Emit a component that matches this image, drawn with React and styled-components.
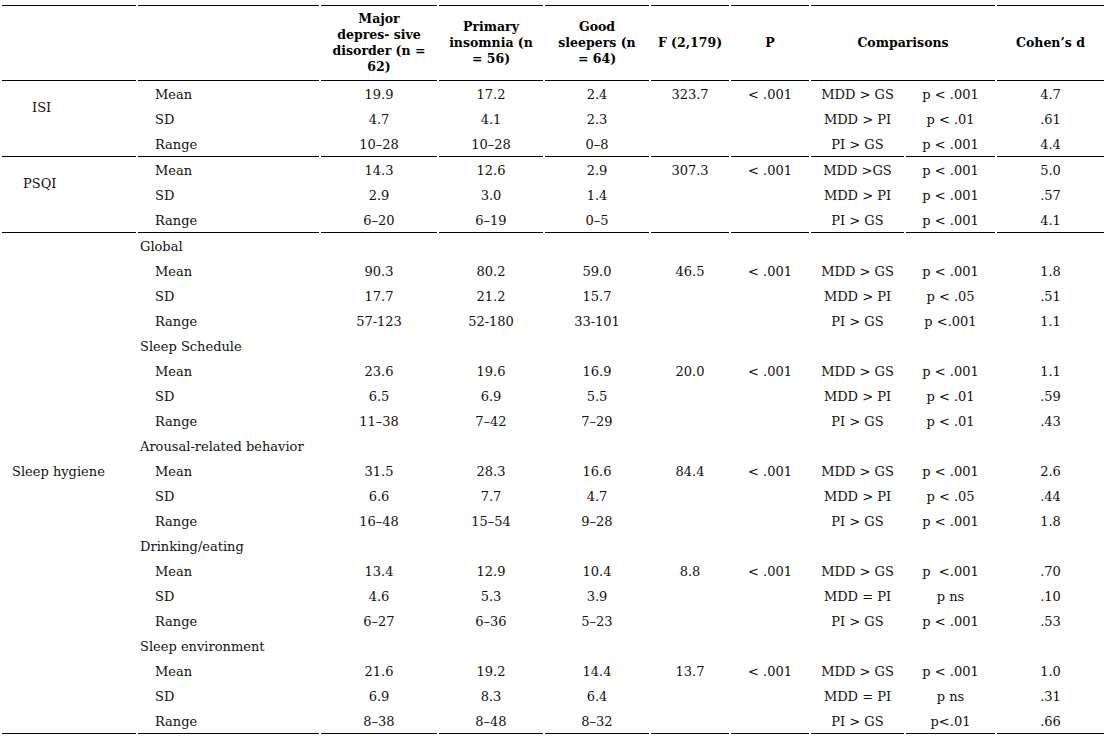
import React from "react";
import styled, { createGlobalStyle } from "styled-components";

const GlobalStyle = createGlobalStyle`
  html, body {
    margin: 0;
    padding: 0;
    background: #fff;
  }
  body {
    font-family: "DejaVu Serif", "Liberation Serif", serif;
    color: #111;
  }
`;

const Table = styled.table`
  width: 1106px;
  margin-top: 3px;
  table-layout: fixed;
  border-collapse: separate;
  border-spacing: 2px;
  font-size: 13px;
`;

const Col = styled.col`
  width: ${(p) => p.$w}px;
`;

const HeadCell = styled.th`
  border-top: 1px solid #000;
  border-bottom: 1px solid #000;
  padding: 5px 2px;
  font-size: 12.5px;
  font-weight: bold;
  line-height: 16px;
  text-align: center;
  vertical-align: middle;
  color: #000;
`;

const Cell = styled.td`
  padding: 1px 2px 1px ${(p) => p.$indent ?? 2}px;
  line-height: 21px;
  white-space: pre;
  text-align: ${(p) => p.$align || "center"};
  vertical-align: middle;
  border-bottom: ${(p) => (p.$end ? "1px solid #000" : "0")};
`;

// ranges in the source use an en dash
const r = (a, b) => `${a}\u2013${b}`;

const groups = [
  {
    label: "ISI",
    indent: 30,
    span: 2,
    rows: [
      ["Mean", "19.9", "17.2", "2.4", "323.7", "< .001", "MDD > GS", "p < .001", "4.7"],
      ["SD", "4.7", "4.1", "2.3", "", "", "MDD > PI", "p < .01", ".61"],
      ["Range", r(10, 28), r(10, 28), r(0, 8), "", "", "PI > GS", "p < .001", "4.4"],
    ],
  },
  {
    label: "PSQI",
    indent: 21,
    span: 2,
    rows: [
      ["Mean", "14.3", "12.6", "2.9", "307.3", "< .001", "MDD >GS", "p < .001", "5.0"],
      ["SD", "2.9", "3.0", "1.4", "", "", "MDD > PI", "p < .001", ".57"],
      ["Range", r(6, 20), r(6, 19), r(0, 5), "", "", "PI > GS", "p < .001", "4.1"],
    ],
  },
];

const hygiene = [
  {
    title: "Global",
    rows: [
      ["Mean", "90.3", "80.2", "59.0", "46.5", "< .001", "MDD > GS", "p < .001", "1.8"],
      ["SD", "17.7", "21.2", "15.7", "", "", "MDD > PI", "p < .05", ".51"],
      ["Range", "57-123", "52-180", "33-101", "", "", "PI > GS", "p <.001", "1.1"],
    ],
  },
  {
    title: "Sleep Schedule",
    rows: [
      ["Mean", "23.6", "19.6", "16.9", "20.0", "< .001", "MDD > GS", "p < .001", "1.1"],
      ["SD", "6.5", "6.9", "5.5", "", "", "MDD > PI", "p < .01", ".59"],
      ["Range", r(11, 38), r(7, 42), r(7, 29), "", "", "PI > GS", "p < .01", ".43"],
    ],
  },
  {
    title: "Arousal-related behavior",
    rows: [
      ["Mean", "31.5", "28.3", "16.6", "84.4", "< .001", "MDD > GS", "p < .001", "2.6"],
      ["SD", "6.6", "7.7", "4.7", "", "", "MDD > PI", "p < .05", ".44"],
      ["Range", r(16, 48), r(15, 54), r(9, 28), "", "", "PI > GS", "p < .001", "1.8"],
    ],
  },
  {
    title: "Drinking/eating",
    rows: [
      ["Mean", "13.4", "12.9", "10.4", "8.8", "< .001", "MDD > GS", "p  <.001", ".70"],
      ["SD", "4.6", "5.3", "3.9", "", "", "MDD = PI", "p ns", ".10"],
      ["Range", r(6, 27), r(6, 36), r(5, 23), "", "", "PI > GS", "p < .001", ".53"],
    ],
  },
  {
    title: "Sleep environment",
    rows: [
      ["Mean", "21.6", "19.2", "14.4", "13.7", "< .001", "MDD > GS", "p < .001", "1.0"],
      ["SD", "6.9", "8.3", "6.4", "", "", "MDD = PI", "p ns", ".31"],
      ["Range", r(8, 38), r(8, 48), r(8, 32), "", "", "PI > GS", "p<.01", ".66"],
    ],
  },
];

const widths = [134, 181, 116, 104, 104, 78, 78, 93, 89, 107];

function Values({ row, end }) {
  return (
    <>
      <Cell $align="left" $indent={17} $end={end}>{row[0]}</Cell>
      {row.slice(1).map((v, i) => (
        <Cell key={i} $end={end}>{v}</Cell>
      ))}
    </>
  );
}

export default function App() {
  const hygieneRows = [];
  hygiene.forEach((sub, si) => {
    hygieneRows.push({ title: sub.title, key: `t${si}` });
    sub.rows.forEach((row, ri) =>
      hygieneRows.push({ row, key: `r${si}-${ri}`, label: si === 2 && ri === 0 })
    );
  });

  return (
    <>
      <GlobalStyle />
      <Table>
        <colgroup>
          {widths.map((w, i) => (
            <Col key={i} $w={w} />
          ))}
        </colgroup>
        <thead>
          <tr>
            <HeadCell />
            <HeadCell />
            <HeadCell>Major<br />depres- sive<br />disorder (n =<br />62)</HeadCell>
            <HeadCell>Primary<br />insomnia (n<br />= 56)</HeadCell>
            <HeadCell>Good<br />sleepers (n<br />= 64)</HeadCell>
            <HeadCell>F (2,179)</HeadCell>
            <HeadCell>P</HeadCell>
            <HeadCell colSpan={2}>Comparisons</HeadCell>
            <HeadCell>Cohen’s d</HeadCell>
          </tr>
        </thead>
        <tbody>
          {groups.map((g) =>
            g.rows.map((row, ri) => {
              const end = ri === g.rows.length - 1;
              return (
                <tr key={g.label + ri}>
                  {ri === 0 && (
                    <Cell rowSpan={g.span} $align="left" $indent={g.indent}>
                      {g.label}
                    </Cell>
                  )}
                  {ri === 2 && <Cell $end />}
                  <Values row={row} end={end} />
                </tr>
              );
            })
          )}
          {hygieneRows.map((h, i) => {
            const end = i === hygieneRows.length - 1;
            return (
              <tr key={h.key}>
                <Cell $align="left" $indent={10} $end={end}>
                  {h.label ? "Sleep hygiene" : ""}
                </Cell>
                {h.title ? (
                  <>
                    <Cell $align="left" $end={end}>{h.title}</Cell>
                    {Array.from({ length: 8 }).map((_, k) => (
                      <Cell key={k} $end={end} />
                    ))}
                  </>
                ) : (
                  <Values row={h.row} end={end} />
                )}
              </tr>
            );
          })}
        </tbody>
      </Table>
    </>
  );
}
